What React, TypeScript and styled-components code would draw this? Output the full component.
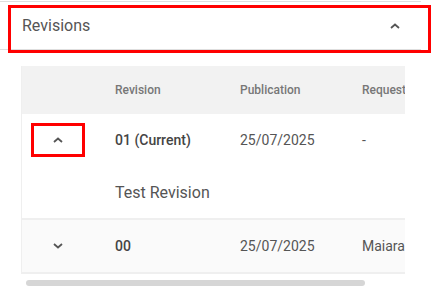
import React from 'react';
import styled, { createGlobalStyle } from 'styled-components';

const GlobalStyle = createGlobalStyle`
	body {
		margin: 0;
		padding-top: 1px;
		background: #fff;
		font-family: Roboto, 'Liberation Sans', sans-serif;
	}
`;

const Panel = styled.section`
	position: relative;
	width: 421px;
	border-top: 1px solid #dedede;
`;

const PanelHeader = styled.header`
	height: 47px;
	display: flex;
	align-items: center;
	justify-content: space-between;
	padding: 0 21px 0 22px;
	border-bottom: 1px solid #dedede;
	font-size: 16px;
	color: #555;
`;

const HeaderMark = styled.div`
	position: absolute;
	left: 8px;
	top: 3px;
	width: 423px;
	height: 48px;
	box-sizing: border-box;
	border: 3px solid #f00;
	pointer-events: none;
`;

const Content = styled.div`
	padding: 16px 0 0 21px;
`;

const TableFrame = styled.div`
	width: 384px;
	overflow: hidden;
	border-left: 1px solid #efefef;
	border-bottom: 2px solid #efefef;
	box-sizing: border-box;
`;

const Table = styled.table`
	width: 520px;
	table-layout: fixed;
	border-collapse: collapse;
`;

const HeadCell = styled.th`
	height: 48px;
	padding: 0 0 0 16px;
	background: #f2f2f2;
	text-align: left;
	font-size: 12px;
	font-weight: 500;
	color: #777;
	white-space: nowrap;
`;

const Row = styled.tr<{ $shaded?: boolean; $divided?: boolean }>`
	background: ${(p) => (p.$shaded ? '#fafafa' : '#fff')};
	border-top: ${(p) => (p.$divided ? '2px solid #efefef' : 'none')};
`;

const Cell = styled.td<{ $strong?: boolean }>`
	height: 52px;
	padding: 0 0 0 16px;
	font-size: 14px;
	font-weight: ${(p) => (p.$strong ? 500 : 400)};
	color: ${(p) => (p.$strong ? '#444' : '#555')};
	white-space: nowrap;
`;

const ToggleCell = styled.td`
	height: 52px;
	padding: 0 0 0 9px;
`;

const DetailCell = styled.td`
	height: 52px;
	padding: 0 0 0 16px;
	font-size: 16px;
	color: #555;
`;

const Toggle = styled.button<{ $marked?: boolean }>`
	width: 54px;
	height: 34px;
	display: flex;
	align-items: center;
	justify-content: center;
	padding: 0;
	background: transparent;
	border: 3px solid ${(p) => (p.$marked ? '#f00' : 'transparent')};
	cursor: pointer;
`;

const Scrollbar = styled.div`
	margin: 6px 0 0 5px;
	width: 339px;
	height: 6px;
	border-radius: 3px;
	background: #d6d6d6;
`;

const Chevron: React.FC<{ up?: boolean }> = ({ up }) => (
	<svg width="10" height="6" viewBox="0 0 10 6">
		<polyline
			points={up ? '1,5 5,1.5 9,5' : '1,1 5,4.5 9,1'}
			fill="none"
			stroke="#555"
			strokeWidth="1.8"
		/>
	</svg>
);

const App: React.FC = () => {
	return (
		<>
			<GlobalStyle />
			<Panel>
				<PanelHeader>
					<span>Revisions</span>
					<Chevron up />
				</PanelHeader>
				<HeaderMark />
			</Panel>
			<Content>
				<TableFrame>
					<Table>
						<colgroup>
							<col style={{ width: 77 }} />
							<col style={{ width: 125 }} />
							<col style={{ width: 122 }} />
							<col style={{ width: 196 }} />
						</colgroup>
						<thead>
							<tr>
								<HeadCell />
								<HeadCell>Revision</HeadCell>
								<HeadCell>Publication</HeadCell>
								<HeadCell>Requested by</HeadCell>
							</tr>
						</thead>
						<tbody>
							<Row>
								<ToggleCell>
									<Toggle type="button" $marked>
										<Chevron up />
									</Toggle>
								</ToggleCell>
								<Cell $strong>01 (Current)</Cell>
								<Cell>25/07/2025</Cell>
								<Cell>-</Cell>
							</Row>
							<Row>
								<td />
								<DetailCell colSpan={3}>Test Revision</DetailCell>
							</Row>
							<Row $shaded $divided>
								<ToggleCell>
									<Toggle type="button">
										<Chevron />
									</Toggle>
								</ToggleCell>
								<Cell $strong>00</Cell>
								<Cell>25/07/2025</Cell>
								<Cell>Maiara Souza</Cell>
							</Row>
						</tbody>
					</Table>
				</TableFrame>
				<Scrollbar />
			</Content>
		</>
	);
};

export default App;
